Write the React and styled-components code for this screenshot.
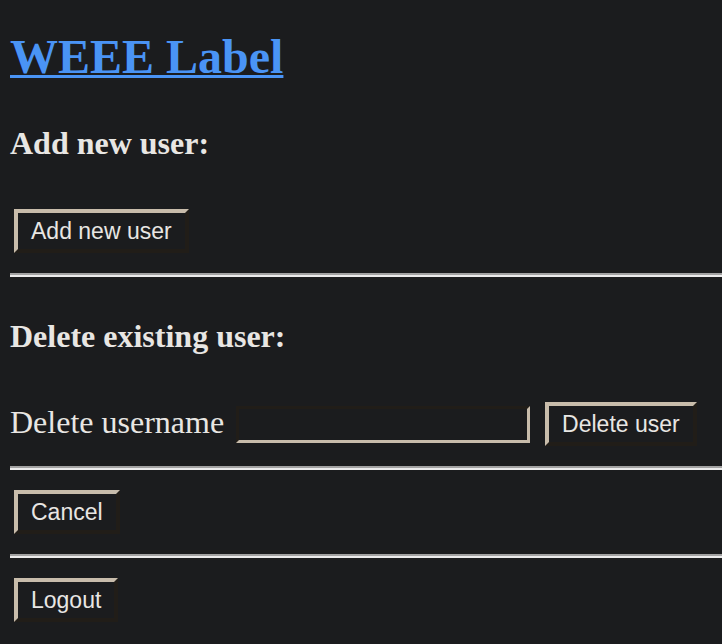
import React from 'react';
import styled, { createGlobalStyle } from 'styled-components';

const GlobalStyle = createGlobalStyle`
  html, body {
    margin: 0;
    background: #1b1c1e;
  }
  body {
    font-family: "Liberation Serif", "Times New Roman", serif;
    color: #e8e6e3;
    overflow: hidden;
  }
`;

const Page = styled.div`
  padding: 29px 0 0 10px;
  min-height: 100vh;
  box-sizing: border-box;
`;

const Title = styled.h1`
  margin: 0;
  font-size: 48px;
  line-height: 55px;
  font-weight: bold;

  a {
    color: #4a94f5;
    text-decoration: underline;
    text-decoration-thickness: 3px;
  }
`;

const SectionTitle = styled.h3`
  margin: ${p => p.$top}px 0 0;
  font-size: 32px;
  line-height: 37px;
  font-weight: bold;
`;

const Button = styled.button`
  display: inline-block;
  box-sizing: border-box;
  height: 44px;
  margin: ${p => p.$top || 0}px 0 0 ${p => (p.$inline ? 0 : 4)}px;
  padding: 5px 13px;
  font-family: "Liberation Sans", Arial, sans-serif;
  font-size: 23px;
  line-height: 26px;
  color: #e8e6e3;
  background: #1b1c1e;
  border-style: solid;
  border-width: 4px;
  border-color: #c8bcab #211d18 #211d18 #c8bcab;
  cursor: pointer;
`;

const Rule = styled.hr`
  display: block;
  margin: 20px 0 0;
  height: 0;
  border: 0;
  border-top: 2px solid #a2a2a2;
  border-bottom: 2px solid #ebebeb;
`;

const Row = styled.form`
  display: flex;
  align-items: center;
  margin: 47px 0 0;
`;

const Label = styled.label`
  font-size: 32px;
  line-height: 37px;
  margin: 0 12px 4px 0;
`;

const Input = styled.input`
  box-sizing: border-box;
  width: 294px;
  height: 37px;
  margin-right: 15px;
  padding: 0 6px;
  font-family: "Liberation Sans", Arial, sans-serif;
  font-size: 20px;
  color: #e8e6e3;
  background: #1b1c1e;
  border-style: solid;
  border-width: 3px;
  border-color: #211d18 #c8bcab #c8bcab #211d18;
  outline: none;
`;

export default function App() {
  return (
    <>
      <GlobalStyle />
      <Page>
        <Title><a href="#">WEEE Label</a></Title>

        <SectionTitle $top={41}>Add new user:</SectionTitle>
        <Button $top={47}>Add new user</Button>

        <Rule />

        <SectionTitle $top={41}>Delete existing user:</SectionTitle>
        <Row onSubmit={e => e.preventDefault()}>
          <Label htmlFor="username">Delete username</Label>
          <Input id="username" type="text" />
          <Button $inline>Delete user</Button>
        </Row>

        <Rule />
        <Button $top={20}>Cancel</Button>

        <Rule />
        <Button $top={20}>Logout</Button>
      </Page>
    </>
  );
}
